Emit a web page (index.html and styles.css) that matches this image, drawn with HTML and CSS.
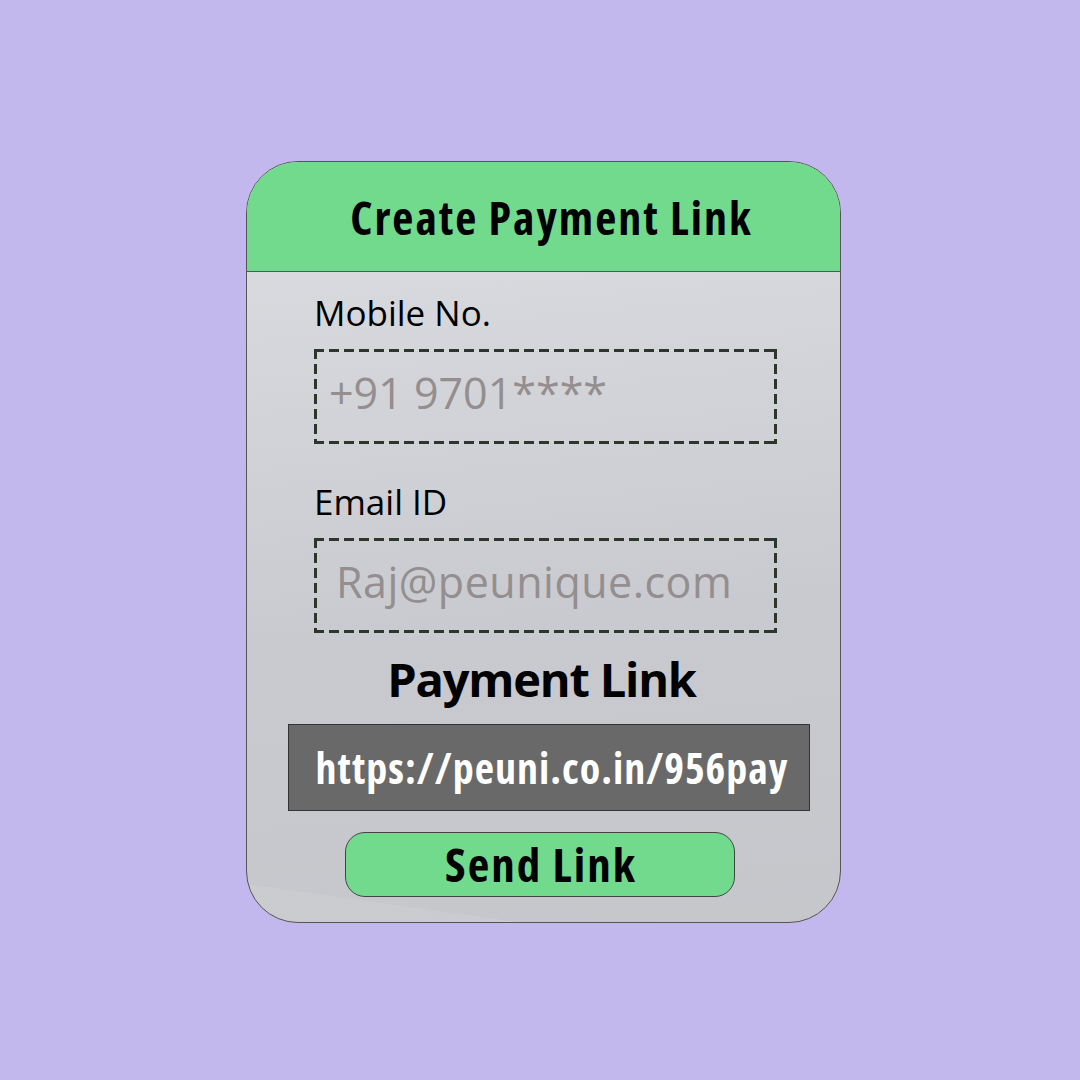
FILE: index.html
```html
<!DOCTYPE html>
<html>
<head>
<meta charset="utf-8">
<link rel="stylesheet" href="styles.css">
</head>
<body>
<div class="card">
  <div class="header"><h1 class="title">Create Payment Link</h1></div>
  <div class="content">
    <div class="label label-mobile">Mobile No.</div>
    <div class="field field-mobile"><span class="placeholder">+91 9701****</span></div>
    <div class="label label-email">Email ID</div>
    <div class="field field-email"><span class="placeholder placeholder-email">Raj@peunique.com</span></div>
    <div class="link-title">Payment Link</div>
    <div class="link-box">https://peuni.co.in/956pay</div>
    <div class="btn-row"><div class="btn">Send Link</div></div>
  </div>
</div>
</body>
</html>
```
FILE: styles.css
```css
html, body {
  margin: 0;
  padding: 0;
}
body {
  width: 1080px;
  height: 1080px;
  background: #c2b8ee;
  font-family: "Open Sans", "Noto Sans", sans-serif;
  box-sizing: border-box;
  padding: 161px 0 0 246px;
}
.card {
  width: 595px;
  height: 762px;
  box-sizing: border-box;
  border: 1px solid #555;
  border-radius: 52px;
  overflow: hidden;
  background:
    linear-gradient(188deg, transparent 95.5%, rgba(255,255,255,0.07) 95.5%),
    linear-gradient(175deg, #dddee2 0%, #c9cacf 60%, #c6c7cb 100%);
  display: flex;
  flex-direction: column;
}
.header {
  height: 110px;
  box-sizing: border-box;
  background: #72da8c;
  border-bottom: 1.5px solid #555;
  display: flex;
  align-items: center;
  justify-content: center;
  padding-left: 16px;
}
.title {
  margin: 0;
  font-size: 46px;
  font-weight: 700;
  font-stretch: 87.5%;
  letter-spacing: 2px;
  color: #000;
  line-height: 1;
}
.content {
  padding: 0 0 0 67px;
  display: flex;
  flex-direction: column;
}
.label {
  font-size: 35px;
  color: #000;
  line-height: 1;
}
.label-mobile { margin-top: 23px; }
.label-email { margin-top: 40px; }
.field {
  width: 463px;
  height: 95px;
  box-sizing: border-box;
  margin-top: 19px;
  padding-top: 22px;
  background:
    repeating-linear-gradient(90deg, #2a372a 0 10px, transparent 10px 15px) left top / 100% 3px no-repeat,
    repeating-linear-gradient(90deg, #2a372a 0 10px, transparent 10px 15px) left bottom / 100% 3px no-repeat,
    repeating-linear-gradient(180deg, #2a372a 0 10px, transparent 10px 15px) left top / 3px 100% no-repeat,
    repeating-linear-gradient(180deg, #2a372a 0 10px, transparent 10px 15px) right top / 3px 100% no-repeat;
}
.field-mobile { padding-left: 15px; }
.field-email { padding-left: 22px; }
.placeholder {
  display: block;
  font-size: 43px;
  color: #948e8e;
  line-height: 1;
}
.placeholder-email { letter-spacing: 0.5px; }
.link-title {
  width: 463px;
  text-align: center;
  font-size: 47px;
  font-weight: 700;
  letter-spacing: -1.2px;
  color: #000;
  line-height: 1;
  margin-top: 23px;
  margin-left: -4px;
}
.link-box {
  margin-left: -26px;
  width: 522px;
  height: 87px;
  box-sizing: border-box;
  margin-top: 21px;
  background: #696969;
  border: 1px solid #333;
  color: #fff;
  font-size: 42px;
  font-weight: 700;
  font-stretch: 87.5%;
  letter-spacing: 1px;
  line-height: 1;
  display: flex;
  align-items: center;
  justify-content: center;
  padding-left: 6px;
}
.btn-row {
  display: flex;
  margin-top: 21px;
  margin-left: 31px;
}
.btn {
  width: 390px;
  height: 65px;
  box-sizing: border-box;
  background: #72da8c;
  border: 1px solid #444;
  border-radius: 20px;
  display: flex;
  align-items: center;
  justify-content: center;
  padding-left: 2px;
  font-size: 47px;
  font-weight: 700;
  font-stretch: 87.5%;
  letter-spacing: 2px;
  line-height: 1;
  color: #000;
}
```
